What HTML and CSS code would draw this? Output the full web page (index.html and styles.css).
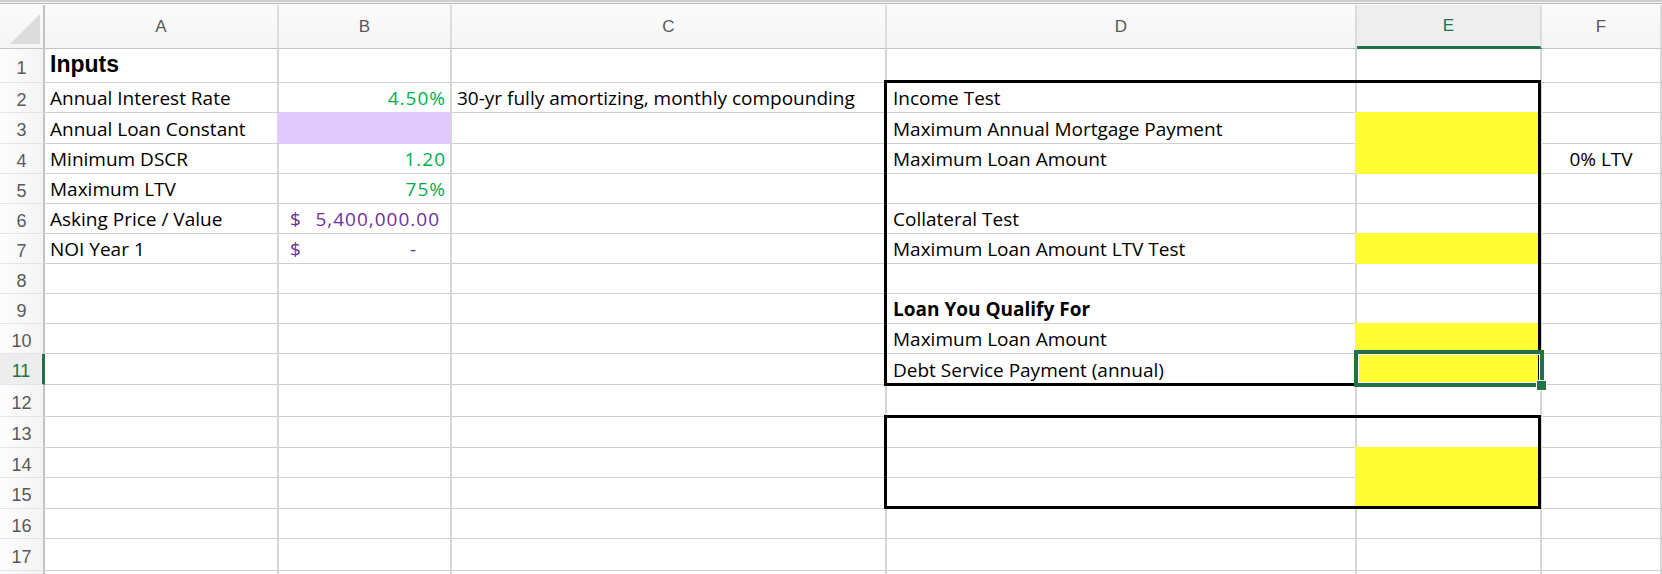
FILE: index.html
```html
<!DOCTYPE html>
<html>
<head>
<meta charset="utf-8">
<link rel="stylesheet" href="styles.css">
</head>
<body>
<div class="topbar"></div>
<div class="sheet">
  <div class="cells">
    <!-- header -->
    <div class="c corner"><span class="tri"></span></div>
    <div class="c ch">A</div>
    <div class="c ch">B</div>
    <div class="c ch">C</div>
    <div class="c ch">D</div>
    <div class="c ch sel">E</div>
    <div class="c ch">F</div>
    <!-- 1 -->
    <div class="c rh">1</div>
    <div class="c inputs">Inputs</div>
    <div class="c"></div><div class="c"></div><div class="c"></div><div class="c"></div><div class="c"></div>
    <!-- 2 -->
    <div class="c rh">2</div>
    <div class="c">Annual Interest Rate</div>
    <div class="c num g">4.50%</div>
    <div class="c">30-yr fully amortizing, monthly compounding</div>
    <div class="c dtxt">Income Test</div>
    <div class="c"></div>
    <div class="c"></div>
    <!-- 3 -->
    <div class="c rh">3</div>
    <div class="c">Annual Loan Constant</div>
    <div class="c lav"></div>
    <div class="c"></div>
    <div class="c dtxt">Maximum Annual Mortgage Payment</div>
    <div class="c yel"></div>
    <div class="c"></div>
    <!-- 4 -->
    <div class="c rh">4</div>
    <div class="c">Minimum DSCR</div>
    <div class="c num g">1.20</div>
    <div class="c"></div>
    <div class="c dtxt">Maximum Loan Amount</div>
    <div class="c yel"></div>
    <div class="c ctr">0% LTV</div>
    <!-- 5 -->
    <div class="c rh">5</div>
    <div class="c">Maximum LTV</div>
    <div class="c num g">75%</div>
    <div class="c"></div><div class="c"></div><div class="c"></div><div class="c"></div>
    <!-- 6 -->
    <div class="c rh">6</div>
    <div class="c">Asking Price / Value</div>
    <div class="c acct p"><span>$</span><span class="amt">5,400,000.00</span></div>
    <div class="c"></div>
    <div class="c dtxt">Collateral Test</div>
    <div class="c"></div>
    <div class="c"></div>
    <!-- 7 -->
    <div class="c rh">7</div>
    <div class="c">NOI Year 1</div>
    <div class="c acct p"><span>$</span><span class="dash">-</span></div>
    <div class="c"></div>
    <div class="c dtxt">Maximum Loan Amount LTV Test</div>
    <div class="c yel"></div>
    <div class="c"></div>
    <!-- 8 -->
    <div class="c rh">8</div>
    <div class="c"></div><div class="c"></div><div class="c"></div><div class="c"></div><div class="c"></div><div class="c"></div>
    <!-- 9 -->
    <div class="c rh">9</div>
    <div class="c"></div><div class="c"></div><div class="c"></div>
    <div class="c dtxt b">Loan You Qualify For</div>
    <div class="c"></div><div class="c"></div>
    <!-- 10 -->
    <div class="c rh">10</div>
    <div class="c"></div><div class="c"></div><div class="c"></div>
    <div class="c dtxt">Maximum Loan Amount</div>
    <div class="c yel"></div>
    <div class="c"></div>
    <!-- 11 -->
    <div class="c rh rsel">11</div>
    <div class="c"></div><div class="c"></div><div class="c"></div>
    <div class="c dtxt">Debt Service Payment (annual)</div>
    <div class="c yel"></div>
    <div class="c"></div>
    <!-- 12 -->
    <div class="c rh">12</div>
    <div class="c"></div><div class="c"></div><div class="c"></div><div class="c"></div><div class="c"></div><div class="c"></div>
    <!-- 13 -->
    <div class="c rh">13</div>
    <div class="c"></div><div class="c"></div><div class="c"></div><div class="c"></div><div class="c"></div><div class="c"></div>
    <!-- 14 -->
    <div class="c rh">14</div>
    <div class="c"></div><div class="c"></div><div class="c"></div><div class="c"></div>
    <div class="c yel"></div>
    <div class="c"></div>
    <!-- 15 -->
    <div class="c rh">15</div>
    <div class="c"></div><div class="c"></div><div class="c"></div><div class="c"></div>
    <div class="c yel"></div>
    <div class="c"></div>
    <!-- 16 -->
    <div class="c rh">16</div>
    <div class="c"></div><div class="c"></div><div class="c"></div><div class="c"></div><div class="c"></div><div class="c"></div>
    <!-- 17 -->
    <div class="c rh">17</div>
    <div class="c"></div><div class="c"></div><div class="c"></div><div class="c"></div><div class="c"></div><div class="c"></div>
    <!-- 18 (only its top edge is in view) -->
    <div class="c rh"></div>
    <div class="c"></div><div class="c"></div><div class="c"></div><div class="c"></div><div class="c"></div><div class="c"></div>
  </div>
  <div class="marks">
    <div class="box box1"></div>
    <div class="box box2"></div>
    <div class="selection"><span class="handle"></span></div>
  </div>
</div>
</body>
</html>
```

FILE: styles.css
```css
html, body {
  margin: 0;
  padding: 0;
  background: #fff;
  overflow: hidden;
  width: 1662px;
  height: 574px;
}

.topbar {
  height: 5px;
  background: linear-gradient(#cdcdcd 0 2px, #f4f4f4 2px 3px, #b9b9b9 3px 4px, #fbfbfb 4px);
}

.sheet {
  display: grid;
}

.cells, .marks {
  grid-area: 1 / 1;
  display: grid;
  grid-template-columns: 45px 234px 173px 435px 470px 185px 120px;
  grid-template-rows: 44px 34px 30px 31px 30px 30px 30px 30px 30px 30px 30px 31px 32px 31px 30px 31px 30px 32px 30px;
}

.marks {
  pointer-events: none;
}

.c {
  box-sizing: border-box;
  border-right: 2px solid #d6d6d6;
  border-bottom: 1px solid #d0d0d0;
  display: flex;
  align-items: flex-end;
  padding: 0 5px 2px 5px;
  font-family: "Open Sans", sans-serif;
  font-size: 19px;
  line-height: 1.2;
  color: #000;
  white-space: nowrap;
  overflow: visible;
  min-width: 0;
}

.dtxt {
  padding-left: 6px;
}

.b {
  font-weight: 700;
}

.num {
  justify-content: flex-end;
  letter-spacing: 1px;
  padding-right: 4px;
}

.ctr {
  justify-content: center;
}

.g {
  color: #00b050;
}

.p {
  color: #7030a0;
}

.acct {
  justify-content: space-between;
  padding-left: 11px;
  padding-right: 11px;
}

.amt {
  letter-spacing: 1px;
  margin-right: -1px;
}

.dash {
  margin-right: 23px;
}

.inputs {
  font-family: "Liberation Sans", Arial, sans-serif;
  font-weight: 700;
  font-size: 23px;
  padding-bottom: 3px;
}

.yel {
  background: #ffff33;
  border-bottom-color: #ffff33;
  box-shadow: -2px 0 0 #ffff33, 0 -1px 0 #ffff33, -2px -1px 0 #ffff33;
}

.lav {
  background: #e0c9fd;
  border-bottom-color: #e0c9fd;
  box-shadow: -2px 0 0 #e0c9fd, 0 -1px 0 #e0c9fd, -2px -1px 0 #e0c9fd;
}

/* headers */
.ch {
  background: linear-gradient(#fbfbfb, #f5f5f5);
  border-right-color: #dcdcdc;
  border-bottom: 1px solid #c4c4c4;
  justify-content: center;
  align-items: center;
  padding: 0;
  font-family: "Liberation Sans", Arial, sans-serif;
  font-size: 17px;
  line-height: 1;
  color: #595959;
}

.ch.sel {
  background: #eeeeee;
  color: #217346;
  border-bottom: 3px solid #217346;
}

.corner {
  background: linear-gradient(#fbfbfb, #f5f5f5);
  border-right-color: #c2c2c2;
  border-bottom: 1px solid #c4c4c4;
  padding: 0 3px 4px 0;
  justify-content: flex-end;
}

.tri {
  width: 30px;
  height: 30px;
  background: #dcdcdc;
  clip-path: polygon(100% 0, 100% 100%, 0 100%);
}

.rh {
  background: linear-gradient(to right, #fdfdfd, #f4f4f4);
  border-right-color: #c2c2c2;
  border-bottom-color: #e4e4e4;
  justify-content: center;
  align-items: center;
  padding: 4px 0 0 0;
  font-family: "Liberation Sans", Arial, sans-serif;
  font-size: 18px;
  line-height: 1;
  color: #595959;
}

.rh.rsel {
  background: #ededed;
  color: #217346;
  border-right: 3px solid #217346;
}

/* overlays */
.box {
  border: 3px solid #000;
}

.box1 {
  grid-column: 5 / 7;
  grid-row: 3 / 13;
  margin: -3px 1px -1px -3px;
}

.box2 {
  grid-column: 5 / 7;
  grid-row: 14 / 17;
  margin: -2px 1px 0 -3px;
}

.selection {
  grid-column: 6;
  grid-row: 12;
  margin: -4px -2px -2px -3px;
  border: 4px solid #217346;
  box-shadow: inset 0 0 0 1px #fff;
  position: relative;
}

.handle {
  position: absolute;
  right: -7px;
  bottom: -8px;
  width: 9px;
  height: 9px;
  background: #217346;
  border: 1px solid #fff;
}
```
